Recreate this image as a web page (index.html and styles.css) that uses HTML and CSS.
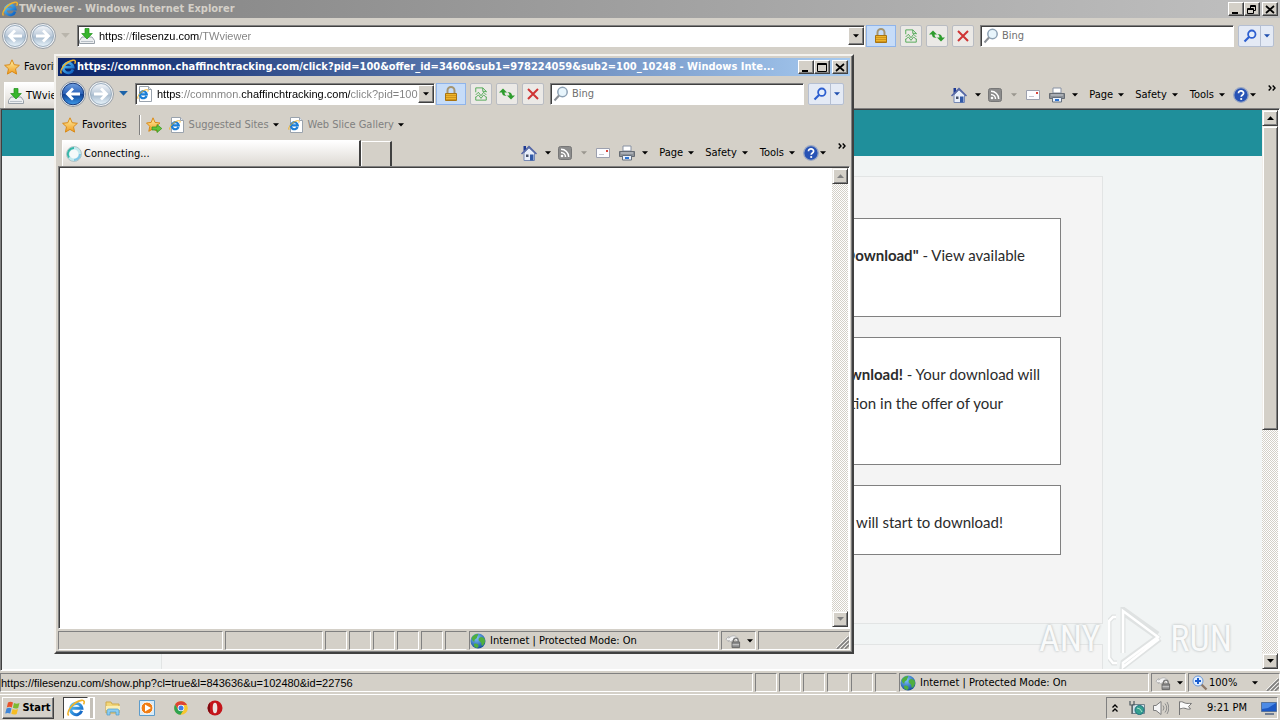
FILE: index.html
```html
<!DOCTYPE html>
<html lang="en">
<head>
<meta charset="utf-8">
<title>TWviewer - Windows Internet Explorer</title>
<link rel="stylesheet" href="styles.css">
</head>
<body>
<svg class="defs" aria-hidden="true">
  <defs>
    <linearGradient id="g-blue" x1="0" y1="0" x2="0" y2="1"><stop offset="0" stop-color="#6f9fe0"/><stop offset=".48" stop-color="#2b62b8"/><stop offset=".5" stop-color="#0d3f94"/><stop offset="1" stop-color="#3f9bea"/></linearGradient>
    <linearGradient id="g-pale" x1="0" y1="0" x2="0" y2="1"><stop offset="0" stop-color="#f4f7fb"/><stop offset=".5" stop-color="#b9c8d8"/><stop offset=".55" stop-color="#a9bccf"/><stop offset="1" stop-color="#e9f4fb"/></linearGradient>
    <linearGradient id="g-gold" x1="0" y1="0" x2="0" y2="1"><stop offset="0" stop-color="#fff3a8"/><stop offset="1" stop-color="#f09a1c"/></linearGradient>
    <linearGradient id="g-ie" x1="0" y1="0" x2="1" y2="1"><stop offset="0" stop-color="#5cc8f8"/><stop offset="1" stop-color="#0a5cc0"/></linearGradient>
    <radialGradient id="g-globe" cx=".4" cy=".3" r=".8"><stop offset="0" stop-color="#7fc4ff"/><stop offset="1" stop-color="#08408f"/></radialGradient>
    <symbol id="i-ie" viewBox="0 0 16 16"><path d="M13 10.5A5 5 0 1 1 13.2 8.2H4.5" fill="none" stroke="url(#g-ie)" stroke-width="2.7"/><path d="M1.5 14.6C-1 12 5 2.5 13 1.2c2.500-.3 2.800 1.500 1.700 3.600" fill="none" stroke="#f2b32a" stroke-width="1.400"/></symbol>
    <symbol id="i-iepage" viewBox="0 0 16 16"><path d="M2.500.5h9l3 3v12h-12z" fill="#fff" stroke="#9aa3ad"/><path d="M11.500.5v3h3" fill="#e3e8ee" stroke="#9aa3ad"/><path d="M9.600 10A3.500 3.500 0 1 1 9.800 8.300H3.500" fill="none" stroke="#1c7fd6" stroke-width="2.200"/><path d="M1 12.800C-.5 11 4 4.500 9.500 3.700c2-.2 2 1 1.300 2" fill="none" stroke="#f2b32a"/></symbol>
    <symbol id="i-back" viewBox="0 0 26 26"><circle cx="13" cy="13" r="12.500" fill="#e8edf2" stroke="#8f979f"/><circle cx="13" cy="13" r="10.800" fill="url(#g-blue)" stroke="#1a3c7c"/><path d="M20 13H8M13 7.500 7.500 13l5.500 5.500" fill="none" stroke="#fff" stroke-width="2.800"/></symbol>
    <symbol id="i-backoff" viewBox="0 0 26 26"><circle cx="13" cy="13" r="12.500" fill="#eef1f4" stroke="#979da4"/><circle cx="13" cy="13" r="10.500" fill="url(#g-pale)" stroke="#9caebf"/><path d="M20 13H8M13 7.500 7.500 13l5.500 5.500" fill="none" stroke="#fff" stroke-width="2.800"/></symbol>
    <symbol id="i-fwdoff" viewBox="0 0 26 26"><circle cx="13" cy="13" r="12.500" fill="#eef1f4" stroke="#979da4"/><circle cx="13" cy="13" r="10.500" fill="url(#g-pale)" stroke="#9caebf"/><path d="M6 13h12M13 7.500l5.500 5.500-5.500 5.500" fill="none" stroke="#fff" stroke-width="2.800"/></symbol>
    <symbol id="i-down" viewBox="0 0 7 4"><path d="M0 0h7L3.500 3.800z" fill="currentColor"/></symbol>
    <symbol id="i-up" viewBox="0 0 7 4"><path d="M0 4h7L3.500.2z" fill="currentColor"/></symbol>
    <symbol id="i-dl" viewBox="0 0 16 16"><path d="M3 9h10l2.500 3.500v3H.5v-3z" fill="#eceef0" stroke="#98a0a8"/><path d="M2 13.500h12" stroke="#b9c0c7"/><path d="M6 .5h4v5h3.300L8 11 2.700 5.500H6z" fill="#37b52d" stroke="#1f8f1b" stroke-width=".7"/></symbol>
    <symbol id="i-lock" viewBox="0 0 16 16"><path d="M4.500 8V4.500a3.500 3.500 0 0 1 7 0V8" fill="none" stroke="#a59571" stroke-width="2"/><path d="M2.500 7.500h11v7h-11z" fill="#eeb52c" stroke="#a87412"/><path d="M3 9.500h10M3 11.500h10M3 13.500h10" stroke="#c98c17" stroke-width=".8"/></symbol>
    <symbol id="i-compat" viewBox="0 0 14 16"><path d="M1 6V1h8l4 4v1M9 1v4h4M1 11v4h12v-4M1 9l3-3 3 4 3-4 3 3M1 12l3-3 3 4 3-4 3 3" fill="none" stroke="#46a34a"/></symbol>
    <symbol id="i-refresh" viewBox="0 0 16 14"><path d="M0 5.500 4 1.500l4 4H5.500C5.500 8 7 8.500 8 8.500c-3 1-5-.5-5-3z" fill="#2d9c2d"/><path d="M16 8.500l-4 4-4-4h2.500c0-2.500-1.500-3-2.500-3 3-1 5 .5 5 3z" fill="#2d9c2d"/></symbol>
    <symbol id="i-stop" viewBox="0 0 12 12"><path d="M1 1l10 10M11 1 1 11" stroke="#cf3434" stroke-width="2"/></symbol>
    <symbol id="i-mag" viewBox="0 0 16 16"><circle cx="9.500" cy="6" r="4.700" fill="#e8f5fc" stroke="#8ea2b5" stroke-width="1.500"/><path d="M6 9.500 1.500 14.500" stroke="#8a8f96" stroke-width="2"/></symbol>
    <symbol id="i-find" viewBox="0 0 14 14"><circle cx="8.800" cy="5.200" r="3.700" fill="#e4eefc" stroke="#2d5fd0" stroke-width="1.800"/><path d="M6 8 1.500 12.500" stroke="#2d5fd0" stroke-width="2.200"/></symbol>
    <symbol id="i-star" viewBox="0 0 16 16"><path d="M8 .8l2.200 4.900 5.200.6-3.900 3.500 1.100 5.300L8 12.400l-4.600 2.700 1.100-5.300L.6 6.300l5.200-.6z" fill="url(#g-gold)" stroke="#d98a18"/></symbol>
    <symbol id="i-addfav" viewBox="0 0 16 16"><path d="M7 .8l2 4.600 5 .6-3.700 3.300 1 5L7 11.800l-4.200 2.500 1-5L.5 6l4.700-.6z" fill="url(#g-gold)" stroke="#d98a18"/><path d="M6 10h5V7.500l4.800 4-4.800 4V13H6z" fill="#63c33c" stroke="#2f8f1b" stroke-width=".7"/></symbol>
    <symbol id="i-home" viewBox="0 0 16 16"><path d="M3 8v7.500h10.500V8L8 3z" fill="#e9effa" stroke="#7789b5"/><path d="M.5 9 8 1.500 15.500 9" fill="none" stroke="#4f62a5" stroke-width="1.500"/><path d="M2.500 1h2.500v3l-2.500 2z" fill="#1d3a94"/><path d="M9 9.500h3.500v6H9z" fill="#3159a8"/><path d="M5 9.500h2.500V12H5z" fill="#46516a"/></symbol>
    <symbol id="i-rss" viewBox="0 0 14 14"><rect x=".5" y=".5" width="13" height="13" rx="2" fill="#8c8c8c" stroke="#777"/><circle cx="4" cy="10" r="1.300" fill="#fff"/><path d="M3 6.500A4.500 4.500 0 0 1 7.500 11M3 3.300A7.700 7.700 0 0 1 10.700 11" fill="none" stroke="#fff" stroke-width="1.500"/></symbol>
    <symbol id="i-mail" viewBox="0 0 14 10"><path d="M.5.5h13v9H.5z" fill="#fcfcff" stroke="#9ca0ae"/><path d="M10 2h2v2h-2z" fill="#d8443c"/><path d="M3 6.500h5" stroke="#c3c5cf"/></symbol>
    <symbol id="i-print" viewBox="0 0 16 16"><path d="M4 1h8v5H4z" fill="#fff" stroke="#8791a3"/><path d="M.5 6.500h15v5H.500z" fill="#8b9097" stroke="#666c74"/><path d="M2 8h12" stroke="#c8ccd2"/><path d="M3.500 10.500h9v4.500h-9z" fill="#e9f2ff" stroke="#66707d"/><path d="M6 13h4" stroke="#2d74d2" stroke-width="2"/></symbol>
    <symbol id="i-help" viewBox="0 0 16 16"><circle cx="8" cy="8" r="7.300" fill="#2853b5" stroke="#9aa8c4" stroke-width="1.300"/><path d="M5.500 6.300c0-3.500 5.300-3 5.100 0-.1 1.700-2.400 1.700-2.400 3.500" fill="none" stroke="#fff" stroke-width="1.700"/><circle cx="8.200" cy="12" r="1.100" fill="#fff"/></symbol>
    <symbol id="i-globe" viewBox="0 0 16 16"><circle cx="8" cy="8" r="7.500" fill="url(#g-globe)"/><path d="M1.500 5C3 2 6 .8 8 1c1 1-1 2-1 3.500S4 6 4.500 8 2 8 1.500 5zM9 5c2-2 4-1 5.500.5C16 9 14 12 12 13c-1-1 0-3-1.500-4S8 7 9 5zM4 11c2-1 4 0 4.500 1.500S7.500 15 6.500 15C4.500 14 3.500 13 4 11z" fill="#4fae3f"/></symbol>
    <symbol id="i-shield" viewBox="0 0 17 16"><path d="M1 6l3-3v2c4-4 8-3 10 1v4L10 6 6 9 4 7v2z" fill="#f2f2f2" stroke="#b2b2b2"/><path d="M9 9V7.500a2.500 2.500 0 0 1 5 0V9" fill="none" stroke="#777" stroke-width="1.300"/><path d="M7.500 9h8v6h-8z" fill="#8b8b8b" stroke="#666"/><path d="M8 12h7" stroke="#d5d5d5"/></symbol>
    <symbol id="i-chev" viewBox="0 0 8 6"><path d="M.7.5 3 3 .7 5.500M4.700.5 7 3 4.700 5.500" fill="none" stroke="#000" stroke-width="1.400"/></symbol>
    <symbol id="i-min" viewBox="0 0 10 9"><path d="M1 7h6v2H1z"/></symbol>
    <symbol id="i-max" viewBox="0 0 10 9"><path d="M.5.500h9v8h-9zM.5 1.500h9" fill="none" stroke="#000"/></symbol>
    <symbol id="i-restore" viewBox="0 0 10 9"><path d="M3.500 3V.5h5v5H7M3 1.500h6M.5 3.500h6v5h-6zM.5 4.500h6" fill="none" stroke="#000"/></symbol>
    <symbol id="i-close" viewBox="0 0 10 9"><path d="M1 1l8 7M9 1 1 8" stroke="#000" stroke-width="1.700"/></symbol>
    <symbol id="i-grip" viewBox="0 0 13 13"><path d="M1 13 13 1M5 13l8-8M9 13l4-4" stroke="#808080" stroke-width="1.600"/><path d="M0 12 12 0M4 12l8-8M8 12l4-4" stroke="#fff" stroke-width=".7"/></symbol>
    <symbol id="i-spin" viewBox="0 0 16 16"><circle cx="8" cy="8" r="6" fill="#f4fafa" stroke="#c2e9ee" stroke-width="3"/><path d="M8 2a6 6 0 0 0-5 9.500" fill="none" stroke="#35b7a8" stroke-width="2"/><path d="M14 8a6 6 0 0 1-6 6" fill="none" stroke="#7fc7e6" stroke-width="2"/><circle cx="8" cy="8" r="7.500" fill="none" stroke="#a2b4b8" stroke-width=".7"/></symbol>
    <symbol id="i-zoom" viewBox="0 0 16 16"><path d="M9.500 9.500 14.500 14.500" stroke="#8d7868" stroke-width="2.300"/><circle cx="6" cy="6" r="5" fill="#e2efff" stroke="#6e9ad8"/><path d="M6 3v6M3 6h6" stroke="#1b5fd0" stroke-width="2"/></symbol>
  </defs>
</svg>

<main class="desktop">
  <section class="window" aria-label="TWviewer">
    <header class="titlebar inactive">
      <svg class="ic16"><use href="#i-ie"/></svg>
      <h1 class="title">TWviewer - Windows Internet Explorer</h1>
      <div class="caption">
        <button class="cap" aria-label="Minimize"><svg><use href="#i-min"/></svg></button><button class="cap" aria-label="Restore"><svg><use href="#i-restore"/></svg></button><button class="cap close" aria-label="Close"><svg><use href="#i-close"/></svg></button>
      </div>
    </header>
    <div class="navbar">
      <button class="round" aria-label="Back"><svg><use href="#i-backoff"/></svg></button>
      <button class="round" aria-label="Forward"><svg><use href="#i-fwdoff"/></svg></button>
      <button class="recent dim" aria-label="Recent pages"><svg><use href="#i-down"/></svg></button>
      <div class="address">
        <svg class="ic16"><use href="#i-dl"/></svg>
        <input class="url url-main" aria-label="Address" value="https://filesenzu.com/TWviewer">
        <button class="drop" aria-label="Show address list"><svg class="arrow"><use href="#i-down"/></svg></button>
      </div>
      <button class="lock" aria-label="Security report"><svg class="ic16"><use href="#i-lock"/></svg></button>
      <div class="tools">
        <button class="tool" aria-label="Compatibility view"><svg class="ic14"><use href="#i-compat"/></svg></button>
        <button class="tool" aria-label="Refresh"><svg class="ic16"><use href="#i-refresh"/></svg></button>
        <button class="tool" aria-label="Stop"><svg class="ic12"><use href="#i-stop"/></svg></button>
      </div>
      <div class="search"><svg class="ic16"><use href="#i-mag"/></svg><input class="query" aria-label="Search" placeholder="Bing"></div>
      <div class="go"><button class="find" aria-label="Search"><svg class="ic14"><use href="#i-find"/></svg></button><button class="more" aria-label="Search options"><svg class="arrow"><use href="#i-down"/></svg></button></div>
    </div>
    <div class="favbar">
      <button class="fav"><svg class="ic16"><use href="#i-star"/></svg>Favorites</button>
    </div>
    <div class="tabrow">
      <button class="tab"><svg class="ic16"><use href="#i-dl"/></svg>TWviewer</button>
      <div class="commands">
        <button class="cmd c-home" aria-label="Home"><svg class="ic16"><use href="#i-home"/></svg><svg class="arrow"><use href="#i-down"/></svg></button>
        <button class="cmd c-feed" aria-label="Feeds"><svg class="ic14"><use href="#i-rss"/></svg><svg class="arrow faint"><use href="#i-down"/></svg></button>
        <button class="cmd c-mail" aria-label="Read mail"><svg class="ic14"><use href="#i-mail"/></svg></button>
        <button class="cmd c-print" aria-label="Print"><svg class="ic16"><use href="#i-print"/></svg><svg class="arrow"><use href="#i-down"/></svg></button>
        <button class="cmd c-page">Page<svg class="arrow"><use href="#i-down"/></svg></button>
        <button class="cmd c-safety">Safety<svg class="arrow"><use href="#i-down"/></svg></button>
        <button class="cmd c-tools">Tools<svg class="arrow"><use href="#i-down"/></svg></button>
        <button class="cmd c-help" aria-label="Help"><svg class="ic16"><use href="#i-help"/></svg><svg class="arrow"><use href="#i-down"/></svg></button>
        <button class="cmd c-chev" aria-label="More commands"><svg class="chev"><use href="#i-chev"/></svg></button>
      </div>
    </div>
    <div class="viewport">
      <div class="page">
        <div class="banner"></div>
        <div class="panel">
          <div class="card two"><p class="line a">Click the button <b>"Download"</b> - View available</p></div>
          <div class="card three"><p class="line b"><b>Unlock your download!</b> - Your download will</p><p class="line c">start after completion in the offer of your</p></div>
          <div class="card one"><p class="line d">Your file will start to download!</p></div>
        </div>
        <div class="panel next"></div>
        <div class="watermark">
          <span>ANY</span>
          <svg class="play" viewBox="0 0 54 64"><path d="M8 10H5l-4 4v37l4 5h4M15 46V6l34 24-34 25-1 6 38-29M15 6v-4l35 25" fill="none" stroke="#dfe2e2" stroke-width="5"/><path d="M8 10H5l-4 4v37l4 5h4M15 46V4l35 26-35 26v4l36-28" fill="none" stroke="#fff" stroke-width="2.500"/></svg>
          <span>RUN</span>
        </div>
      </div>
      <div class="scroll">
        <button class="sbtn" aria-label="Scroll up"><svg class="arrow"><use href="#i-up"/></svg></button>
        <div class="thumb"></div>
        <button class="sbtn last" aria-label="Scroll down"><svg class="arrow"><use href="#i-down"/></svg></button>
      </div>
    </div>
    <footer class="status">
      <div class="cell grow">https://filesenzu.com/show.php?cl=true&amp;l=843636&amp;u=102480&amp;id=22756</div>
      <div class="cell sm"></div><div class="cell sm"></div><div class="cell sm"></div><div class="cell sm"></div><div class="cell sm"></div><div class="cell sm open"></div>
      <div class="cell zone"><svg class="ic16"><use href="#i-globe"/></svg>Internet | Protected Mode: On</div>
      <div class="cell prot"><svg class="ic16"><use href="#i-shield"/></svg><svg class="arrow"><use href="#i-down"/></svg></div>
      <div class="cell zoom"><svg class="ic16"><use href="#i-zoom"/></svg>100%<svg class="arrow"><use href="#i-down"/></svg><svg class="grip"><use href="#i-grip"/></svg></div>
    </footer>
  </section>

  <footer class="taskbar">
    <button class="start"><svg class="ic16" viewBox="0 0 16 16"><path d="M3 2.500c2-1 3.500-.8 5 .1L6.800 7.500C5 6.500 3.500 6.600 1.800 7.400z" fill="#e8532b"/><path d="M9 3c2 1 3.600.9 5.500 0l-1.300 5c-2 .9-3.500.7-5.300-.2z" fill="#7dba2f"/><path d="M1.500 8.500c2-.9 3.500-.8 5 .1l-1.300 5c-1.700-1-3.300-.9-5 0z" fill="#3f86d8"/><path d="M7.600 9c2 1 3.500.9 5.400.1l-1.300 4.900c-2 .9-3.600.8-5.400-.2z" fill="#f6bd24"/></svg>Start</button>
    <button class="task active" aria-label="Internet Explorer"><svg><use href="#i-ie"/></svg></button><span class="stack"></span>
    <button class="task" aria-label="Explorer"><svg viewBox="0 0 16 16"><path d="M1 2h5l1 2h7v9H1z" fill="#f2d678" stroke="#cfa94a"/><path d="M1 6h14v4H1z" fill="#fbeeb4"/><path d="M2 15v-4c0-1.500 1-2 2-2h8c1 0 2 .5 2 2v4h-3v-3H5v3z" fill="#8ccdf0" stroke="#4a9cce" stroke-width=".7"/></svg></button>
    <button class="task" aria-label="Media Player"><svg viewBox="0 0 16 16"><path d="M.5.5h15v15H.500z" fill="#d8ebf8" stroke="#5d9ccb"/><circle cx="8" cy="8" r="6" fill="#f07d14" stroke="#fff"/><path d="M6 4.500 12 8l-6 3.500z" fill="#fff"/></svg></button>
    <button class="task" aria-label="Chrome"><svg viewBox="0 0 16 16"><circle cx="8" cy="8" r="6.800" fill="#f7c62f"/><path d="M2.100 4.600A6.800 6.800 0 0 1 14 5H8L5 9.500z" fill="#dd4335"/><path d="M2.100 4.600A6.800 6.800 0 0 0 7.500 14.800L10.500 10 5 9.500z" fill="#2fa350"/><circle cx="8" cy="8" r="3.300" fill="#fff"/><circle cx="8" cy="8" r="2.500" fill="#3f7ee8"/></svg></button>
    <button class="task" aria-label="Opera"><svg viewBox="0 0 16 16"><circle cx="8" cy="8" r="7.500" fill="#c4151b"/><path d="M1 6a7.500 7.500 0 0 0 2 7.500V2.500A7 7 0 0 0 1 6z" fill="#7e0a10"/><ellipse cx="8" cy="8" rx="2.300" ry="5.300" fill="#ece4e2"/></svg></button>
    <div class="tray">
      <svg class="up2" viewBox="0 0 6 8"><path d="M.5 3.500 3 1l2.500 2.500M.5 7.500 3 5l2.500 2.500" fill="none" stroke="#000" stroke-width="1.300"/></svg>
      <svg class="ic16" viewBox="0 0 16 16"><path d="M3.500 4.500h12v9h-12z" fill="#cfe0e6" stroke="#71838c"/><circle cx="10.500" cy="10" r="4.500" fill="#36a08f" stroke="#1c6f80"/><path d="M8 8l3 1 2 3" stroke="#a9e2cf" fill="none"/><path d="M1 1v4h4V1M3 5v9" fill="none" stroke="#4f5a60" stroke-width="1.200"/></svg>
      <svg class="ic16" viewBox="0 0 16 16"><path d="M.5 5.500H3L8 1.500v13L3 10.500H.5z" fill="#f5f5f5" stroke="#7d7d7d"/><path d="M10 5.500q2 2.500 0 5M12 3.500q3.500 4.500 0 9M14 2q3.500 6 0 12" fill="none" stroke="#8c8c8c"/></svg>
      <svg class="ic16" viewBox="0 0 16 16"><path d="M2.500 15V1.500M2.500 2c3-1 4 .8 6 1.200 2 .5 3 0 6 .3l-3 3 2 2.500c-3 .5-3.500-.2-5.500-.7S5 8.500 2.500 9" fill="#fafafa" stroke="#777"/></svg>
      <time class="clock">9:21 PM</time>
      <svg class="ic16" viewBox="0 0 16 16"><path d="M.5 2.500h15v9H.500z" fill="#1d59c4" stroke="#55729c"/><path d="M1 3h14L7 8 1 9z" fill="#4d8be6"/><path d="M4 14h9" stroke="#6e7d94" stroke-width="2"/></svg>
    </div>
  </footer>

  <section class="window popup" aria-label="Connecting">
    <header class="titlebar">
      <svg class="ic16"><use href="#i-ie"/></svg>
      <h2 class="title">https://comnmon.chaffinchtracking.com/click?pid=100&amp;offer_id=3460&amp;sub1=978224059&amp;sub2=100_10248 - Windows Inte...</h2>
      <div class="caption">
        <button class="cap" aria-label="Minimize"><svg><use href="#i-min"/></svg></button><button class="cap" aria-label="Maximize"><svg><use href="#i-max"/></svg></button><button class="cap close" aria-label="Close"><svg><use href="#i-close"/></svg></button>
      </div>
    </header>
    <div class="navbar">
      <button class="round" aria-label="Back"><svg><use href="#i-back"/></svg></button>
      <button class="round" aria-label="Forward"><svg><use href="#i-fwdoff"/></svg></button>
      <button class="recent" aria-label="Recent pages"><svg><use href="#i-down"/></svg></button>
      <div class="address">
        <svg class="ic16"><use href="#i-iepage"/></svg>
        <input class="url url-popup" aria-label="Address" value="https://comnmon.chaffinchtracking.com/click?pid=100">
        <button class="drop" aria-label="Show address list"><svg class="arrow"><use href="#i-down"/></svg></button>
      </div>
      <button class="lock" aria-label="Security report"><svg class="ic16"><use href="#i-lock"/></svg></button>
      <div class="tools">
        <button class="tool" aria-label="Compatibility view"><svg class="ic14"><use href="#i-compat"/></svg></button>
        <button class="tool" aria-label="Refresh"><svg class="ic16"><use href="#i-refresh"/></svg></button>
        <button class="tool" aria-label="Stop"><svg class="ic12"><use href="#i-stop"/></svg></button>
      </div>
      <div class="search"><svg class="ic16"><use href="#i-mag"/></svg><input class="query" aria-label="Search" placeholder="Bing"></div>
      <div class="go"><button class="find" aria-label="Search"><svg class="ic14"><use href="#i-find"/></svg></button><button class="more" aria-label="Search options"><svg class="arrow"><use href="#i-down"/></svg></button></div>
    </div>
    <div class="favbar">
      <button class="fav"><svg class="ic16"><use href="#i-star"/></svg>Favorites</button>
      <span class="sep"></span>
      <button class="addfav" aria-label="Add to Favorites"><svg class="ic16"><use href="#i-addfav"/></svg></button>
      <button class="link suggested"><svg class="ic16"><use href="#i-iepage"/></svg>Suggested Sites<svg class="arrow"><use href="#i-down"/></svg></button>
      <button class="link"><svg class="ic16"><use href="#i-iepage"/></svg>Web Slice Gallery<svg class="arrow"><use href="#i-down"/></svg></button>
    </div>
    <div class="tabrow">
      <button class="tab"><svg class="ic16"><use href="#i-spin"/></svg>Connecting...</button>
      <button class="newtab" aria-label="New tab"></button>
      <div class="commands">
        <button class="cmd c-home" aria-label="Home"><svg class="ic16"><use href="#i-home"/></svg><svg class="arrow"><use href="#i-down"/></svg></button>
        <button class="cmd c-feed" aria-label="Feeds"><svg class="ic14"><use href="#i-rss"/></svg><svg class="arrow faint"><use href="#i-down"/></svg></button>
        <button class="cmd c-mail" aria-label="Read mail"><svg class="ic14"><use href="#i-mail"/></svg></button>
        <button class="cmd c-print" aria-label="Print"><svg class="ic16"><use href="#i-print"/></svg><svg class="arrow"><use href="#i-down"/></svg></button>
        <button class="cmd c-page">Page<svg class="arrow"><use href="#i-down"/></svg></button>
        <button class="cmd c-safety">Safety<svg class="arrow"><use href="#i-down"/></svg></button>
        <button class="cmd c-tools">Tools<svg class="arrow"><use href="#i-down"/></svg></button>
        <button class="cmd c-help" aria-label="Help"><svg class="ic16"><use href="#i-help"/></svg><svg class="arrow"><use href="#i-down"/></svg></button>
        <button class="cmd c-chev" aria-label="More commands"><svg class="chev"><use href="#i-chev"/></svg></button>
      </div>
    </div>
    <div class="viewport">
      <div class="page blank"></div>
      <div class="scroll">
        <button class="sbtn" aria-label="Scroll up" disabled><svg class="arrow"><use href="#i-up"/></svg></button>
        <button class="sbtn last" aria-label="Scroll down" disabled><svg class="arrow"><use href="#i-down"/></svg></button>
      </div>
    </div>
    <footer class="status">
      <div class="cell grow"></div><div class="cell progress"></div>
      <div class="cell sm"></div><div class="cell sm"></div><div class="cell sm"></div><div class="cell sm"></div><div class="cell sm"></div><div class="cell sm open"></div>
      <div class="cell zone"><svg class="ic16"><use href="#i-globe"/></svg>Internet | Protected Mode: On</div>
      <div class="cell prot"><svg class="ic16"><use href="#i-shield"/></svg><svg class="arrow"><use href="#i-down"/></svg></div>
      <div class="cell zoom"><svg class="grip"><use href="#i-grip"/></svg></div>
    </footer>
  </section>
</main>
</body>
</html>
```

FILE: styles.css
```css
* { box-sizing: border-box; }
html, body { height: 100%; margin: 0; }
body {
  font: 11px/14px "DejaVu Sans Condensed", "DejaVu Sans", sans-serif;
  color: #000;
  background: #d4d0c8;
  overflow: hidden;
}
button, input { font: inherit; color: inherit; margin: 0; padding: 0; border: 0; background: none; border-radius: 0; }
button { display: flex; align-items: center; justify-content: center; flex: none; white-space: nowrap; }
svg { flex: none; display: block; }
h1, h2, p { margin: 0; font-size: inherit; }
.defs { position: absolute; width: 0; height: 0; }
.ic16 { width: 16px; height: 16px; }
.ic14 { width: 14px; height: 14px; }
.ic12 { width: 12px; height: 12px; }
.arrow { width: 6px; height: 4px; }
.faint { color: #9a978f; }

.desktop { position: relative; height: 100%; display: flex; flex-direction: column; }
.window { flex: 1; min-height: 0; min-width: 0; display: flex; flex-direction: column; background: #d4d0c8; }
.popup {
  position: absolute; left: 54px; top: 54px; width: 800px; height: 600px;
  padding: 2px;
  border: 2px solid; border-color: #f4f2ee #404040 #404040 #f4f2ee;
  box-shadow: inset -1px -1px #808080;
}

.titlebar { flex: none; height: 18px; display: flex; align-items: center; gap: 1px; padding: 0 2px 0 2px; color: #fff; background: linear-gradient(90deg, #0a246a, #a6caf0); }
.inactive { color: #d4d0c8; background: linear-gradient(90deg, #808080, #c0c0c0); }
.title { flex: 1; min-width: 0; font-weight: bold; overflow: hidden; text-overflow: ellipsis; white-space: nowrap; }
.caption { display: flex; margin-left: 3px; }
.cap { width: 16px; height: 14px; background: #d4d0c8; border: 1px solid; border-color: #fff #404040 #404040 #fff; box-shadow: inset -1px -1px #808080; }
.cap svg { width: 10px; height: 9px; }
.close { margin-left: 2px; }

.navbar { flex: none; height: 35px; display: flex; align-items: center; padding: 0 6px 0 1px; }
.round { width: 28px; height: 28px; border-radius: 50%; }
.round svg { width: 26px; height: 26px; }
.recent { width: 16px; margin-right: 4px; color: #1c62a8; }
.recent svg { width: 9px; height: 5px; }
.dim { color: #b9b5ac; }
.address, .search { display: flex; align-items: center; height: 22px; background: #fff; border: 1px solid; border-color: #808080 #fff #fff #808080; box-shadow: inset 1px 1px #404040; padding-left: 1px; }
.address { flex: 1; min-width: 0; }
.url { flex: 1; min-width: 0; height: 16px; margin-left: 4px; font-family: "Liberation Sans", sans-serif; background-clip: text; -webkit-background-clip: text; color: transparent; }
.url-main { background-image: linear-gradient(90deg, #000 24px, #808080 24px 33px, #000 33px 100px, #808080 100px); }
.url-popup { background-image: linear-gradient(90deg, #000 24px, #808080 24px 84px, #000 84px 193px, #808080 193px); }
.drop { width: 16px; height: 18px; margin: 1px 0 0; background: #d4d0c8; border: 1px solid; border-color: #fff #404040 #404040 #fff; box-shadow: inset -1px -1px #808080; }
.lock { width: 30px; height: 22px; margin-left: 1px; border: 1px solid #8fb4ea; background: #c6dcf8; }
.tools { display: flex; gap: 4px; margin: 0 6px 0 4px; }
.tool { width: 22px; height: 22px; border: 1px solid #b9bcc2; border-radius: 2px; background: #ebe9e6; }
.search { width: 254px; padding-left: 2px; }
.query { flex: 1; min-width: 0; margin-left: 3px; }
.query::placeholder { color: #707070; opacity: 1; }
.go { display: flex; margin-left: 4px; height: 22px; border: 1px solid #b5bfd2; border-radius: 2px; background: #e4eaf5; color: #1f4fae; }
.find { width: 21px; }
.more { width: 13px; border-left: 1px solid #b5bfd2; }

.favbar { flex: none; height: 28px; display: flex; align-items: center; padding-left: 4px; }
.fav { gap: 4px; }
.sep { width: 2px; height: 20px; margin: 0 5px 0 12px; border-left: 1px solid #808080; border-right: 1px solid #fff; }
.link { gap: 4px; color: #808080; }
.link .arrow { color: #000; }
.suggested { margin: 0 9px 0 7px; }

.tabrow { flex: none; height: 27px; display: flex; align-items: center; padding-left: 4px; }
.tab { align-self: flex-end; width: 299px; height: 26px; justify-content: flex-start; gap: 2px; padding: 0 3px; background: linear-gradient(#fff, #ddd9d3); border: 1px solid #fff; border-right: 2px solid #404040; border-bottom: 0; }
.newtab { align-self: flex-end; width: 31px; height: 25px; border: 1px solid #fff; border-right: 2px solid #404040; border-bottom: 0; }
.commands { margin-left: auto; display: flex; align-items: center; }
.cmd { height: 20px; }
.cmd .arrow { margin-left: 5px; }
.c-home { width: 30px; margin-right: 7px; }
.c-home .arrow { margin-left: 8px; }
.c-feed { width: 29px; margin-right: 9px; }
.c-feed .arrow { margin-left: 9px; }
.c-mail { margin-right: 9px; }
.c-print { margin-right: 11px; }
.c-print .arrow { margin-left: 7px; }
.c-page { margin-right: 11px; }
.c-safety { margin-right: 12px; }
.c-tools { margin-right: 8px; }
.c-help .arrow { margin-left: 1px; }
.c-chev { align-self: flex-start; height: 6px; width: 12px; margin: 0 2px 0 10px; }
.chev { width: 8px; height: 6px; }

.viewport { flex: 1; min-height: 0; display: flex; border: 1px solid; border-color: #808080 #fff #fff #808080; box-shadow: inset 1px 1px #404040; padding: 1px; background: #fff; }
.page { position: relative; flex: 1; min-width: 0; overflow: hidden; background: #f1f4f4; }
.blank { background: #fff; }
.banner { height: 46px; background: #1f8f9b; }
.panel { width: 942px; margin: 20px auto; padding: 41px; border: 1px solid #e2e4e4; background: #f4f4f4; display: flex; flex-direction: column; gap: 20px; height: 448px; }
.card { border: 1px solid #808080; background: #fff; padding: 22px 20px 17px; font: 15px/29px Lato, sans-serif; color: #2b2b2b; text-align: right; }
.two { min-height: 99px; }
.three { min-height: 128px; }
.a { padding-right: 15px; }
.c, .d { padding-right: 37px; }
.watermark { position: absolute; right: 30px; bottom: -2px; display: flex; align-items: center; gap: 8px; font: 36px/40px "Liberation Sans Narrow", "Roboto Condensed", "DejaVu Sans Condensed", sans-serif; color: #f9fafa; text-shadow: 0 0 3px #c0c4c4, 0 0 2px #ccd0d0; }
.play { width: 54px; height: 64px; }

.scroll { flex: none; width: 16px; display: flex; flex-direction: column; background: repeating-conic-gradient(#fff 0 25%, #d4d0c8 0 50%) 0 0 / 2px 2px; }
.sbtn, .thumb { background: #d4d0c8; border: 1px solid; border-color: #f0eeea #404040 #404040 #f0eeea; box-shadow: inset 1px 1px #fff, inset -1px -1px #808080; }
.sbtn { height: 16px; }
.sbtn .arrow { width: 7px; }
.sbtn:disabled { color: #808080; }
.thumb { height: 304px; }
.last { margin-top: auto; }

.status { flex: none; display: flex; align-items: center; gap: 2px; padding: 2px 0; white-space: nowrap; }
.popup .status { padding-bottom: 0; }
.cell { flex: none; height: 19px; display: flex; align-items: center; border: 1px solid; border-color: #808080 #fff #fff #808080; overflow: hidden; }
.grow { flex: 1; min-width: 0; font-family: "Liberation Sans", sans-serif; }
.progress { width: 98px; }
.sm { width: 22px; }
.open { border-right-color: #d4d0c8; }
.zone { width: 250px; gap: 4px; }
.prot { width: 35px; gap: 6px; padding-left: 3px; }
.zoom { width: 92px; padding-left: 3px; gap: 1px; }
.zoom .arrow { margin-left: 14px; }
.grip { width: 13px; height: 13px; margin-left: auto; align-self: flex-end; }

.taskbar { flex: none; height: 26px; display: flex; align-items: center; padding: 0 2px; border-top: 1px solid #fff; }
.start { width: 52px; height: 22px; gap: 1px; font-weight: bold; border: 1px solid; border-color: #fff #404040 #404040 #fff; box-shadow: inset -1px -1px #808080; }
.task { width: 34px; height: 22px; }
.task svg { width: 16px; height: 16px; }
.active { width: 25px; margin-left: 9px; background: #fff; border: 1px solid; border-color: #404040 #fff #fff #404040; }
.active svg { width: 18px; height: 18px; }
.stack { width: 7px; height: 22px; margin-right: 1px; border: 1px solid #fff; border-width: 1px 2px; background: #c4c0b8; }
.tray { margin-left: auto; width: 172px; height: 22px; display: flex; align-items: center; gap: 8px; padding-left: 5px; border: 1px solid; border-color: #808080 #fff #fff #808080; }
.up2 { width: 6px; height: 8px; margin-right: 3px; }
.clock { margin: 0 auto; white-space: nowrap; }
```
